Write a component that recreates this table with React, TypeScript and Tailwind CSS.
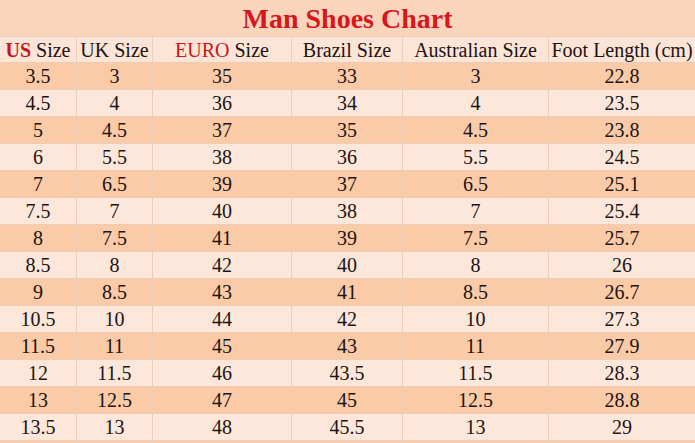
const rows = [
  ["3.5", "3", "35", "33", "3", "22.8"],
  ["4.5", "4", "36", "34", "4", "23.5"],
  ["5", "4.5", "37", "35", "4.5", "23.8"],
  ["6", "5.5", "38", "36", "5.5", "24.5"],
  ["7", "6.5", "39", "37", "6.5", "25.1"],
  ["7.5", "7", "40", "38", "7", "25.4"],
  ["8", "7.5", "41", "39", "7.5", "25.7"],
  ["8.5", "8", "42", "40", "8", "26"],
  ["9", "8.5", "43", "41", "8.5", "26.7"],
  ["10.5", "10", "44", "42", "10", "27.3"],
  ["11.5", "11", "45", "43", "11", "27.9"],
  ["12", "11.5", "46", "43.5", "11.5", "28.3"],
  ["13", "12.5", "47", "45", "12.5", "28.8"],
  ["13.5", "13", "48", "45.5", "13", "29"],
];

const grid = "grid grid-cols-[76px_76px_139px_111px_146px_147px]";

function Cell({ children, first }: { children: React.ReactNode; first?: boolean }) {
  return (
    <div
      className={`flex items-center justify-center whitespace-nowrap ${
        first ? "" : "border-l border-[#ebcdb8]"
      }`}
    >
      {children}
    </div>
  );
}

export default function App() {
  return (
    <div className="w-[695px] h-[443px] overflow-hidden bg-[#fbd5bb] text-[#1c1414] text-[20px] leading-none font-['Liberation_Serif','Times_New_Roman',serif]">
      <div className="h-[36px] flex items-center justify-center pt-[1px]">
        <h1 className="text-[28px] font-bold text-[#d9161d]">Man Shoes Chart</h1>
      </div>

      <div className={`${grid} h-[26px] border-t border-[#ebcdb8] bg-[#fce5d6]`}>
        <Cell first>
          <span className="font-bold text-[#c8161e]">US</span>
          <span className="ml-[5px]">Size</span>
        </Cell>
        <Cell>UK Size</Cell>
        <Cell>
          <span className="text-[#c8161e]">EURO</span>
          <span className="ml-[5px]">Size</span>
        </Cell>
        <Cell>Brazil Size</Cell>
        <Cell>Australian Size</Cell>
        <Cell>Foot Length (cm)</Cell>
      </div>

      {rows.map((r, i) => (
        <div
          key={i}
          className={`${grid} h-[27px] border-t border-[#ebcdb8] ${
            i % 2 === 0 ? "bg-[#fbcaa7]" : "bg-[#fce7da]"
          }`}
        >
          {r.map((v, j) => (
            <Cell key={j} first={j === 0}>
              {v}
            </Cell>
          ))}
        </div>
      ))}

      <div className={`${grid} h-[3px] border-t border-[#ebcdb8] bg-[#fbcaa7]`}>
        {[0, 1, 2, 3, 4, 5].map((j) => (
          <Cell key={j} first={j === 0}>
            {""}
          </Cell>
        ))}
      </div>
    </div>
  );
}
